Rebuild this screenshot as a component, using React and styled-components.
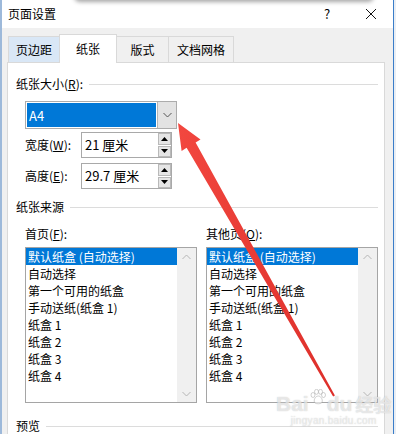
import React from 'react';
import styled, { createGlobalStyle } from 'styled-components';

const GlobalStyle = createGlobalStyle`
  * { box-sizing: border-box; }
  html, body { margin: 0; padding: 0; background: #fff; }
  body {
    font-family: "Noto Sans CJK SC", "Noto Sans", sans-serif;
    font-size: 12px;
    color: #000;
  }
`;

const Screen = styled.div`
  position: relative;
  width: 396px;
  height: 434px;
  overflow: hidden;
  display: flex;
`;

const Dialog = styled.div`
  width: 393px;
  border-left: 2px solid #9db9da;
  display: flex;
  flex-direction: column;
  background: #f0f0f0;
`;

const BehindEdge = styled.div`
  width: 3px;
  border-left: 1px solid #3a7dc9;
  background: #e9eef4;
`;

const TopShadow = styled.div`
  position: absolute;
  left: 74px;
  top: -30px;
  width: 300px;
  height: 30px;
  background: #fff;
  border-radius: 0 0 6px 6px;
  box-shadow: 0 2px 4px rgba(0, 0, 0, 0.35);
`;

const TitleBar = styled.div`
  height: 28px;
  background: #fff;
  display: flex;
  align-items: center;
  padding-left: 6px;
  line-height: 16px;
`;

const Title = styled.span`
  flex: 1;
`;

const TitleButton = styled.div`
  width: 44px;
  height: 28px;
  display: flex;
  align-items: center;
  justify-content: center;
  font-size: 13px;
`;

const TabStrip = styled.div`
  height: 38px;
  display: flex;
  align-items: flex-end;
  padding-left: 6px;
`;

const Tab = styled.div`
  position: relative;
  z-index: ${p => (p.$active ? 2 : 1)};
  width: ${p => p.$width}px;
  height: ${p => (p.$active ? 29 : 26)}px;
  margin-bottom: ${p => (p.$active ? -1 : 0)}px;
  margin-left: -1px;
  border: 1px solid #d9d9d9;
  border-bottom: none;
  background: ${p => (p.$active ? '#fff' : p.$hover ? '#d9e7f6' : '#f0f0f0')};
  display: flex;
  align-items: center;
  justify-content: center;
  line-height: 16px;
  &:first-child { margin-left: 0; }
`;

const Body = styled.div`
  flex: 1;
  display: flex;
  padding: 0 8px 0 5px;
`;

const Panel = styled.div`
  flex: 1;
  background: #fff;
  border: 1px solid #d9d9d9;
  border-bottom: none;
  padding: 13px 6px 0 8px;
  display: flex;
  flex-direction: column;
`;

const GroupHeader = styled.div`
  display: flex;
  align-items: center;
  gap: 6px;
  height: 16px;
  line-height: 16px;
  margin-top: ${p => p.$gap || 0}px;
`;

const HeaderRule = styled.div`
  flex: 1;
  height: 1px;
  background: #dcdcdc;
`;

const Key = styled.span`
  text-decoration: underline;
  text-underline-offset: 1px;
`;

const Indent = styled.div`
  padding-left: 9px;
  display: flex;
  flex-direction: column;
`;

const Combo = styled.div`
  margin-top: 9px;
  width: 152px;
  height: 28px;
  border: 1px solid #acacac;
  display: flex;
`;

const ComboValue = styled.div`
  flex: 1;
  margin: 1px;
  background: #0078d7;
  color: #fff;
  padding-left: 2px;
  display: flex;
  align-items: center;
  font-size: 13px;
`;

const ComboButton = styled.div`
  width: 19px;
  background: #e3e3e3;
  border-left: 1px solid #b5b5b5;
  display: flex;
  align-items: center;
  justify-content: center;
`;

const SpinRow = styled.div`
  display: flex;
  align-items: center;
  height: 26px;
  margin-top: ${p => p.$gap}px;
  line-height: 16px;
`;

const SpinLabel = styled.div`
  width: 56px;
`;

const SpinBox = styled.div`
  width: 91px;
  height: 26px;
  border: 1px solid #a9a9a9;
  display: flex;
  align-items: center;
  padding-left: 3px;
  font-size: 13px;
`;

const SpinValue = styled.div`
  flex: 1;
`;

const SpinButtons = styled.div`
  display: flex;
  flex-direction: column;
  gap: 1px;
  align-self: stretch;
  justify-content: center;
`;

const SpinButton = styled.div`
  width: 13px;
  height: 12px;
  background: #e5e5e5;
  border: 1px solid #b9b9b9;
  display: flex;
  align-items: center;
  justify-content: center;
`;

const ListsRow = styled.div`
  display: flex;
  gap: 9px;
  margin-top: 11px;
`;

const ListColumn = styled.div`
  display: flex;
  flex-direction: column;
`;

const ListLabel = styled.div`
  height: 16px;
  line-height: 16px;
  margin-bottom: 5px;
`;

const ListBox = styled.div`
  width: 172px;
  height: 156px;
  border: 1px solid #a5a5a5;
  display: flex;
`;

const Items = styled.div`
  flex: 1;
  display: flex;
  flex-direction: column;
`;

const Item = styled.div`
  height: 17px;
  line-height: 17px;
  padding-left: 2px;
  white-space: nowrap;
  font-size: 12px;
  background: ${p => (p.$selected ? '#0078d7' : 'transparent')};
  color: ${p => (p.$selected ? '#fff' : '#000')};
`;

const ScrollBar = styled.div`
  width: 19px;
  background: #f0f0f0;
  display: flex;
  flex-direction: column;
  justify-content: space-between;
`;

const ScrollArrow = styled.div`
  height: 17px;
  display: flex;
  align-items: center;
  justify-content: center;
`;

const Overlay = styled.svg`
  position: absolute;
  left: 0;
  top: 0;
  pointer-events: none;
`;

const Watermark = styled.div`
  position: absolute;
  left: 276px;
  top: 389px;
  display: flex;
  flex-direction: column;
  align-items: center;
  color: rgba(255, 255, 255, 0.6);
  text-shadow: 0 0 1px rgba(140, 140, 140, 0.55);
  pointer-events: none;
`;

const MarkLine = styled.div`
  display: flex;
  align-items: flex-end;
  font-family: "Liberation Sans", sans-serif;
  font-weight: 700;
  font-size: 21px;
  line-height: 22px;
`;

const MarkCjk = styled.span`
  font-family: "Noto Sans CJK SC", sans-serif;
  font-size: 18px;
  margin-left: 3px;
`;

const MarkSmall = styled.div`
  font-family: "Liberation Sans", sans-serif;
  font-size: 10px;
  line-height: 12px;
  letter-spacing: 0.3px;
`;

const Chevron = ({ up, color = '#555' }) => (
  <svg width="9" height="6" viewBox="0 0 9 6">
    <path d={up ? 'M0.5 5 L4.5 1 L8.5 5' : 'M0.5 1 L4.5 5 L8.5 1'} fill="none" stroke={color} strokeWidth="1" />
  </svg>
);

const Triangle = ({ up }) => (
  <svg width="7" height="4" viewBox="0 0 7 4">
    <path d={up ? 'M0 4 L3.5 0 L7 4 Z' : 'M0 0 L3.5 4 L7 0 Z'} fill="#000" />
  </svg>
);

const Paw = () => (
  <svg width="16" height="16" viewBox="0 0 16 16" style={{ margin: '0 1px 10px' }}>
    <g fill="rgba(255,255,255,0.6)" stroke="rgba(140,140,140,0.5)" strokeWidth="0.8">
      <ellipse cx="3" cy="6" rx="2" ry="2.5" />
      <ellipse cx="6.5" cy="2.8" rx="2" ry="2.5" />
      <ellipse cx="10.5" cy="2.8" rx="2" ry="2.5" />
      <ellipse cx="13.5" cy="6" rx="2" ry="2.5" />
      <path d="M8.3 7 C5 7 3 12 5 14 C6.5 15 10 15 11.5 14 C13.5 12 11.5 7 8.3 7 Z" />
    </g>
  </svg>
);

const trays = ['默认纸盒 (自动选择)', '自动选择', '第一个可用的纸盒', '手动送纸(纸盒 1)', '纸盒 1', '纸盒 2', '纸盒 3', '纸盒 4'];

const TrayList = () => (
  <ListBox>
    <Items>
      {trays.map((t, i) => (
        <Item key={t} $selected={i === 0}>{t}</Item>
      ))}
    </Items>
    <ScrollBar>
      <ScrollArrow><Chevron up color="#b5b5b5" /></ScrollArrow>
      <ScrollArrow><Chevron color="#b5b5b5" /></ScrollArrow>
    </ScrollBar>
  </ListBox>
);

const Spinner = ({ label, keyChar, value, gap }) => (
  <SpinRow $gap={gap}>
    <SpinLabel>{label}(<Key>{keyChar}</Key>):</SpinLabel>
    <SpinBox>
      <SpinValue>{value}</SpinValue>
      <SpinButtons>
        <SpinButton><Triangle up /></SpinButton>
        <SpinButton><Triangle /></SpinButton>
      </SpinButtons>
    </SpinBox>
  </SpinRow>
);

export default function App() {
  return (
    <Screen>
      <GlobalStyle />
      <Dialog>
        <TitleBar>
          <Title>页面设置</Title>
          <TitleButton>?</TitleButton>
          <TitleButton>
            <svg width="12" height="12" viewBox="0 0 12 12">
              <path d="M1 1 L11 11 M11 1 L1 11" stroke="#111" strokeWidth="1" />
            </svg>
          </TitleButton>
        </TitleBar>
        <TabStrip>
          <Tab $width={52} $hover>页边距</Tab>
          <Tab $width={58} $active>纸张</Tab>
          <Tab $width={53}>版式</Tab>
          <Tab $width={66}>文档网格</Tab>
        </TabStrip>
        <Body>
          <Panel>
            <GroupHeader>
              <span>纸张大小(<Key>R</Key>):</span>
              <HeaderRule />
            </GroupHeader>
            <Indent>
              <Combo>
                <ComboValue>A4</ComboValue>
                <ComboButton><Chevron /></ComboButton>
              </Combo>
              <Spinner label="宽度" keyChar="W" value="21 厘米" gap={3} />
              <Spinner label="高度" keyChar="E" value="29.7 厘米" gap={5} />
            </Indent>
            <GroupHeader $gap={10}>
              <span>纸张来源</span>
              <HeaderRule />
            </GroupHeader>
            <Indent>
              <ListsRow>
                <ListColumn>
                  <ListLabel>首页(<Key>F</Key>):</ListLabel>
                  <TrayList />
                </ListColumn>
                <ListColumn>
                  <ListLabel>其他页(<Key>O</Key>):</ListLabel>
                  <TrayList />
                </ListColumn>
              </ListsRow>
            </Indent>
            <GroupHeader $gap={15}>
              <span>预览</span>
              <HeaderRule />
            </GroupHeader>
          </Panel>
        </Body>
      </Dialog>
      <BehindEdge />
      <TopShadow />
      <Overlay width="396" height="434" viewBox="0 0 396 434">
        <defs>
          <linearGradient id="arrowFill" x1="0" y1="0" x2="1" y2="0">
            <stop offset="0" stopColor="#f2473f" />
            <stop offset="1" stopColor="#dd2f2a" />
          </linearGradient>
        </defs>
        <polygon
          points="178,123 200.5,139.5 195.6,142.4 334.9,395.5 333.1,396.5 186.6,147.8 181.6,151"
          fill="url(#arrowFill)"
        />
      </Overlay>
      <Watermark>
        <MarkLine>
          Bai<Paw />du<MarkCjk>经验</MarkCjk>
        </MarkLine>
        <MarkSmall>jingyan.baidu.com</MarkSmall>
      </Watermark>
    </Screen>
  );
}
